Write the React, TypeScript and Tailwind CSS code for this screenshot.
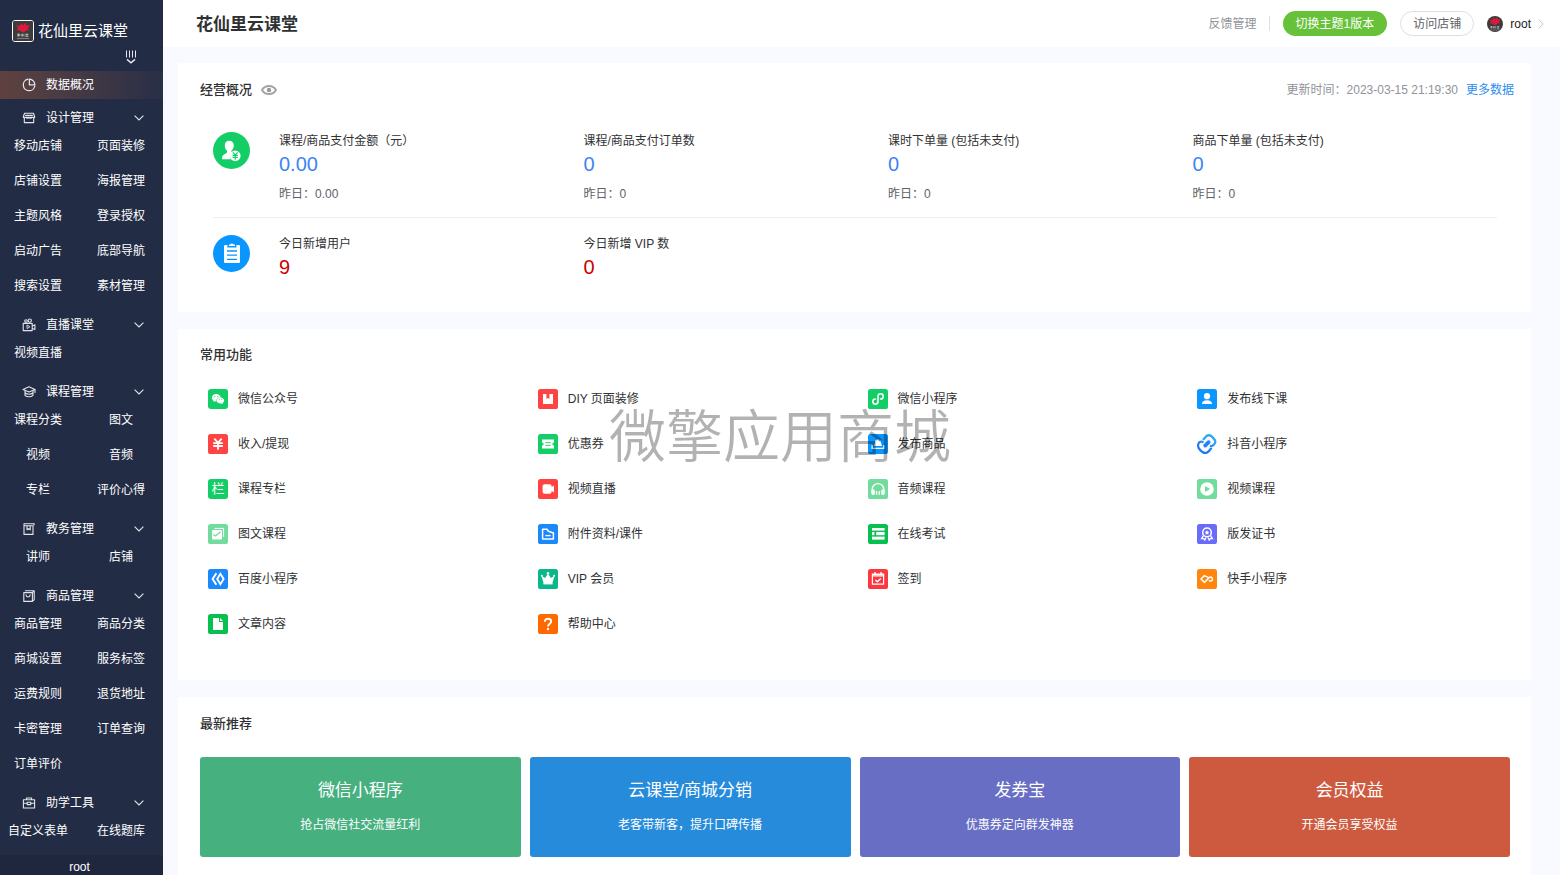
import type { ReactNode } from 'react';
import { AiFillWechat } from 'react-icons/ai';

/* ---------- sidebar icons ---------- */

function LineIcon({ children }: { children: ReactNode }) {
  return (
    <svg
      viewBox="0 0 14 14"
      className="h-[14px] w-[14px] shrink-0 text-[#e3e5ea]"
      fill="none"
      stroke="currentColor"
      strokeWidth="1.1"
      strokeLinecap="round"
      strokeLinejoin="round"
      aria-hidden="true"
    >
      {children}
    </svg>
  );
}

const pieIcon = (
  <LineIcon>
    <path d="M6 1.2A5.8 5.8 0 1 0 12.8 8" strokeWidth="1.3" />
    <path d="M7.4 1.2V6.8H12.8A5.6 5.6 0 0 0 7.4 1.2Z" strokeWidth="1.3" />
  </LineIcon>
);
const shopIcon = (
  <LineIcon>
    <path d="M2.6 2.2H11.4L12.6 5.2V6.4H1.4V5.2Z M2.3 6.8V11.6H11.7V6.8" />
    <path d="M3.6 4.4H10.4M4.2 6.2C4.4 7.6 6.6 7.6 7 6.4C7.4 7.6 9.6 7.6 9.8 6.2" />
  </LineIcon>
);
const liveIcon = (
  <LineIcon>
    <path d="M1.2 5.4H10.2V12.6H1.2Z M10.4 8L12.9 6.8V11.6L10.4 10.4" />
    <path d="M5 7.4V10.6L7.6 9Z" strokeWidth="0.9" />
    <circle cx="4" cy="3" r="1.3" />
    <circle cx="7.8" cy="2.6" r="1.6" />
  </LineIcon>
);
const capIcon = (
  <LineIcon>
    <path d="M7 1.8L13 4.4L7 7L1 4.4Z" />
    <path d="M3 5.8V10.4C4.8 12.2 9.2 12.2 11 10.4V5.8M3.2 8C5 9.6 9 9.6 10.8 8M13 4.6V7.6" />
  </LineIcon>
);
const bookIcon = (
  <LineIcon>
    <path d="M2 1.8H12M2 1.8V12.4H11V3.8H2.4" />
    <path d="M5 4V7.8L6.6 6.6L8.2 7.8V4M12 1.8V3" />
  </LineIcon>
);
const bagIcon = (
  <LineIcon>
    <path d="M1.8 3.6H10.4V12.4H1.8Z M3.4 1.8H12.2V10.8L10.6 12.2M12 2L10.4 3.6" />
    <path d="M4 5.8C4.4 8.8 7.8 8.8 8.2 5.8" />
  </LineIcon>
);
const toolIcon = (
  <LineIcon>
    <path d="M1.4 3.8H12.6V12H1.4Z M4.4 3.6V2H9.6V3.6" />
    <path d="M1.6 7.2H5.2M8.8 7.2H12.4M5.2 6.2H8.8V8.6H5.2Z" />
  </LineIcon>
);

function ChevronDown() {
  return (
    <svg viewBox="0 0 10 6" className="h-[6px] w-[10px]" fill="none" stroke="#e3e5ea" strokeWidth="1.1" aria-hidden="true">
      <path d="M0.6 0.7L5 5L9.4 0.7" />
    </svg>
  );
}

function Logo({ className }: { className: string }) {
  return (
    <svg viewBox="0 0 22 22" className={className} aria-hidden="true">
      <rect width="22" height="22" fill="#3d3c3d" />
      <path
        d="M3.4 4.6L7.4 5.6L9 2.2L11 4.6L14.4 1.8L14.6 5L18.6 4.6L16.2 8L18 9.4L14 10.8L11 13L8 10.8L4 9.8L5.8 7.6Z"
        fill="#e0183d"
      />
      <path d="M4.6 14.6H7.6M6 13.8V17M4.6 16.2H7.6M9 14.2V17M10.4 14V17M12 14.2V17M13.6 14.6H17M13.6 16.8H17M15.3 14V17" stroke="#d8d8d8" strokeWidth="0.8" />
      <path d="M4.4 19.2H17.6" stroke="#9a9a9a" strokeWidth="0.8" />
    </svg>
  );
}

/* ---------- sidebar ---------- */

type Group = { title: string; icon: ReactNode; items: string[] };

const groups: Group[] = [
  {
    title: '设计管理',
    icon: shopIcon,
    items: ['移动店铺', '页面装修', '店铺设置', '海报管理', '主题风格', '登录授权', '启动广告', '底部导航', '搜索设置', '素材管理'],
  },
  { title: '直播课堂', icon: liveIcon, items: ['视频直播'] },
  { title: '课程管理', icon: capIcon, items: ['课程分类', '图文', '视频', '音频', '专栏', '评价心得'] },
  { title: '教务管理', icon: bookIcon, items: ['讲师', '店铺'] },
  {
    title: '商品管理',
    icon: bagIcon,
    items: ['商品管理', '商品分类', '商城设置', '服务标签', '运费规则', '退货地址', '卡密管理', '订单查询', '订单评价'],
  },
  { title: '助学工具', icon: toolIcon, items: ['自定义表单', '在线题库'] },
];

function Sidebar() {
  return (
    <aside className="flex w-[163px] shrink-0 flex-col bg-[#222c45] text-xs text-white">
      <div className="flex items-center gap-1 pt-5 pl-3">
        <Logo className="h-[22px] w-[22px] rounded-[3px] border border-white" />
        <span className="text-[15px] leading-[22px]">花仙里云课堂</span>
      </div>
      <button type="button" aria-label="收起菜单" className="mt-2 mr-[27px] self-end">
        <svg viewBox="0 0 10 15" className="h-[15px] w-[10px]" fill="none" stroke="#e6e8ee" strokeWidth="1" aria-hidden="true">
          <path d="M0.5 0.5V7.5M3.5 0.5V7.5M6.5 0.5V7.5M9.5 0.5V7.5" />
          <path d="M1 9.4L5 12.8L9 9.4" strokeWidth="1.4" />
        </svg>
      </button>
      <nav className="mt-[6px]">
        <a
          href="#overview"
          className="flex h-7 items-center gap-[10px] bg-linear-to-r from-[#5f413f] to-[#282f47] pl-[22px]"
        >
          {pieIcon}
          数据概况
        </a>
        <div className="mt-[5px] flex flex-col gap-[11px]">
          {groups.map((group) => (
            <section key={group.title}>
              <button type="button" className="flex h-7 w-full items-center gap-[10px] pr-[19px] pl-[22px]">
                {group.icon}
                <span className="flex-1 text-left">{group.title}</span>
                <ChevronDown />
              </button>
              <ul className="grid grid-cols-2 gap-x-[7px] gap-y-[7px] pr-1">
                {group.items.map((item) => (
                  <li key={item} className="flex h-7 items-center justify-center whitespace-nowrap">
                    <a href={'#' + item}>{item}</a>
                  </li>
                ))}
              </ul>
            </section>
          ))}
        </div>
      </nav>
      <div className="mt-auto bg-[#1f273f] pt-1 pr-1 text-center leading-4">root</div>
    </aside>
  );
}

/* ---------- header ---------- */

function Header() {
  return (
    <header className="flex h-[47px] items-center justify-between bg-white pr-4 pl-[33px]">
      <h1 className="pt-0.5 text-[17px] font-bold text-[#303133]">花仙里云课堂</h1>
      <div className="flex items-center text-xs">
        <a href="#feedback" className="text-[#909399]">反馈管理</a>
        <span className="mr-[13px] ml-3 h-[15px] w-px bg-[#dcdfe6]" />
        <button type="button" className="h-[25px] rounded-full bg-[#67c23a] px-[13px] text-white">
          切换主题1版本
        </button>
        <button type="button" className="ml-[13px] h-[25px] rounded-full border border-[#dcdfe6] px-3 text-[#606266]">
          访问店铺
        </button>
        <button type="button" className="ml-[13px] flex items-center text-[#222]">
          <Logo className="h-4 w-4 rounded-full" />
          <span className="mr-[7px] ml-[7px]">root</span>
          <svg viewBox="0 0 6 10" className="h-[10px] w-[6px]" fill="none" stroke="#c0c4cc" strokeWidth="1" aria-hidden="true">
            <path d="M0.7 0.6L5.2 5L0.7 9.4" />
          </svg>
        </button>
      </div>
    </header>
  );
}

/* ---------- overview ---------- */

type Stat = { label: string; value: string; yesterday?: string };

const salesStats: Stat[] = [
  { label: '课程/商品支付金额（元）', value: '0.00', yesterday: '0.00' },
  { label: '课程/商品支付订单数', value: '0', yesterday: '0' },
  { label: '课时下单量 (包括未支付)', value: '0', yesterday: '0' },
  { label: '商品下单量 (包括未支付)', value: '0', yesterday: '0' },
];
const userStats: Stat[] = [
  { label: '今日新增用户', value: '9' },
  { label: '今日新增 VIP 数', value: '0' },
];

function StatRow({ icon, stats, valueClass }: { icon: ReactNode; stats: Stat[]; valueClass: string }) {
  return (
    <div className="flex gap-[29px]">
      {icon}
      <dl className="grid flex-1 grid-cols-4">
        {stats.map((s) => (
          <div key={s.label}>
            <dt className="text-xs leading-[18px] text-[#303133]">{s.label}</dt>
            <dd className={valueClass}>{s.value}</dd>
            {s.yesterday && <dd className="mt-[9px] text-xs leading-[18px] text-[#606266]">昨日：{s.yesterday}</dd>}
          </div>
        ))}
      </dl>
    </div>
  );
}

const memberIcon = (
  <svg viewBox="0 0 37 37" className="h-[37px] w-[37px] shrink-0" aria-hidden="true">
    <circle cx="18.5" cy="18.5" r="18.5" fill="#13ce66" />
    <path d="M16.2 8.8C19 8.8 20.8 10.8 20.8 13.6C20.8 15.8 19.8 17.6 18.4 18.8V20L20 21C18 22.4 17 24.6 17.6 27.2H9.2C8.8 24.6 9.4 23.4 11.4 22.2C12.8 21.4 14 21 14 20V18.8C12.6 17.6 11.8 15.8 11.8 13.6C11.8 10.8 13.4 8.8 16.2 8.8Z" fill="#fff" />
    <circle cx="22.2" cy="23.8" r="5.4" fill="#fff" />
    <path d="M19.8 20.4L22.2 23.2L24.6 20.4M19.6 23.4H24.8M19.6 25.4H24.8M22.2 23V27.8" stroke="#13ce66" strokeWidth="1.1" fill="none" />
  </svg>
);
const clipboardIcon = (
  <svg viewBox="0 0 37 37" className="h-[37px] w-[37px] shrink-0" aria-hidden="true">
    <circle cx="18.5" cy="18.5" r="18.5" fill="#0a96ff" />
    <path d="M12 10H14.4V12.4H23.4V10H26A1 1 0 0 1 27 11V27A1 1 0 0 1 26 28H12A1 1 0 0 1 11 27V11A1 1 0 0 1 12 10Z" fill="#fff" />
    <path d="M16 11V9.6H17.4A1.6 1.6 0 0 1 20.4 9.6H22V11Z" fill="#fff" />
    <path d="M14 16H24M14 20.2H24M14 24.4H24" stroke="#0a96ff" strokeWidth="1.3" />
  </svg>
);

function Overview() {
  return (
    <section className="bg-white pt-[17px] pr-[17px] pb-[33px] pl-[22px]">
      <div className="flex items-center justify-between text-xs leading-5">
        <div className="flex items-center gap-[9px]">
          <h2 className="text-[13px] font-medium text-[#303133]">经营概况</h2>
          <button type="button" aria-label="隐藏数据">
            <svg viewBox="0 0 16 10" className="h-[10px] w-4" aria-hidden="true">
              <path d="M1 5C4 -0.4 12 -0.4 15 5C12 10.4 4 10.4 1 5Z" fill="none" stroke="#a3a3a3" strokeWidth="1.9" />
              <circle cx="8" cy="5" r="2.2" fill="#999" />
            </svg>
          </button>
        </div>
        <p className="text-[#909399]">
          更新时间：2023-03-15 21:19:30
          <a href="#more" className="ml-2 text-[#2d8cf0]">更多数据</a>
        </p>
      </div>
      <div className="mt-8 mr-[17px] ml-[13px]">
        <StatRow icon={memberIcon} stats={salesStats} valueClass="mt-0.5 text-xl leading-6 text-[#3d85f0]" />
        <hr className="mt-[14px] mb-[17px] border-[#ebeef5]" />
        <StatRow icon={clipboardIcon} stats={userStats} valueClass="mt-0.5 text-xl leading-6 text-[#cc0000]" />
      </div>
    </section>
  );
}

/* ---------- common functions ---------- */

function Tile({ fill, children }: { fill: string; children: ReactNode }) {
  return (
    <svg viewBox="0 0 20 20" className="h-5 w-5 shrink-0" fill="none" aria-hidden="true">
      <rect width="20" height="20" rx="2.6" fill={fill} />
      {children}
    </svg>
  );
}

const functions: { name: string; icon: ReactNode }[] = [
  {
    name: '微信公众号',
    icon: (
      <span className="flex h-5 w-5 shrink-0 items-center justify-center rounded-[3px] bg-[#13ce66] text-white">
        <AiFillWechat className="h-[14px] w-[14px]" />
      </span>
    ),
  },
  {
    name: 'DIY 页面装修',
    icon: (
      <Tile fill="#ff4343">
        <path d="M5 5H8.4V10L9.9 9L11.4 10V5H15V15H5Z" fill="#fff" />
      </Tile>
    ),
  },
  {
    name: '微信小程序',
    icon: (
      <Tile fill="#13ce66">
        <path d="M7.4 10A2.6 2.6 0 1 0 10 12.6V7.4A2.6 2.6 0 1 1 12.6 10" stroke="#fff" strokeWidth="1.6" strokeLinecap="round" />
      </Tile>
    ),
  },
  {
    name: '发布线下课',
    icon: (
      <Tile fill="#0a96ff">
        <circle cx="10" cy="7.2" r="3.1" fill="#fff" />
        <path d="M5 15C5 12.4 6.8 11.2 10 11.2C13.2 11.2 15 12.4 15 15Z" fill="#fff" />
      </Tile>
    ),
  },
  {
    name: '收入/提现',
    icon: (
      <Tile fill="#ff4343">
        <path d="M6.4 4.6L10 8.8L13.6 4.6M5.2 9.2H14.8M5.2 12H14.8M10 8.8V15.8" stroke="#fff" strokeWidth="1.8" />
      </Tile>
    ),
  },
  {
    name: '优惠券',
    icon: (
      <Tile fill="#13ce66">
        <path d="M4 5.6H16V8.4A1.6 1.6 0 0 0 16 11.6V14.4H4V11.6A1.6 1.6 0 0 0 4 8.4Z" fill="#fff" />
        <path d="M7.4 8.6H12.6M7.4 11.4H12.6" stroke="#13ce66" strokeWidth="0.9" />
      </Tile>
    ),
  },
  {
    name: '发布商品',
    icon: (
      <Tile fill="#0a96ff">
        <path d="M7 6.4H8.6L10 4.8L11.4 6.4H13V9L14 12H6L7 9Z" fill="#fff" />
        <path d="M4.2 11.2V14.4H15.8V11.2" stroke="#fff" strokeWidth="1.4" />
      </Tile>
    ),
  },
  {
    name: '抖音小程序',
    icon: (
      <svg viewBox="0 0 20 20" className="h-5 w-5 shrink-0" fill="none" strokeWidth="2.3" strokeLinecap="round" aria-hidden="true">
        <path d="M6.6 5.2L8.4 3.2C9.8 1.4 12.2 0.8 14.2 2L16.8 4.6C19 7 18.8 9.2 16.4 11" stroke="#2ea7f5" />
        <path d="M2.2 8.4C0.6 10.4 0.8 13.6 3 15.8L5 17.6C7.4 19.6 10 19 11.6 17.4L14 14.6" stroke="#2478f2" />
        <path d="M2.6 8.2C4.2 7.2 5.6 8 5.6 8M15.6 11.6C15 12 14.4 12.2 13.8 12" stroke="#2a90f4" />
        <path d="M8.2 11.6L11.6 8.2" stroke="#2585f2" strokeWidth="3.8" />
      </svg>
    ),
  },
  {
    name: '课程专栏',
    icon: (
      <span aria-hidden="true" className="flex h-5 w-5 shrink-0 items-center justify-center rounded-[3px] bg-[#13ce66] text-[13px] leading-5 text-white">
        栏
      </span>
    ),
  },
  {
    name: '视频直播',
    icon: (
      <Tile fill="#ff4343">
        <rect x="4.6" y="5.2" width="9" height="9.6" rx="2" fill="#fff" />
        <path d="M13 8.6L16 6.6V13.4L13 11.4Z" fill="#fff" />
      </Tile>
    ),
  },
  {
    name: '音频课程',
    icon: (
      <Tile fill="#71dc9d">
        <path d="M4.2 14V10.4A5.8 5.8 0 0 1 15.8 10.4V14" stroke="#fff" strokeWidth="1.4" />
        <rect x="3.4" y="10.6" width="3.4" height="5.4" rx="1.4" fill="#fff" />
        <rect x="8" y="12" width="1.3" height="3.8" rx="0.6" fill="#fff" />
        <rect x="10.7" y="12" width="1.3" height="3.8" rx="0.6" fill="#fff" />
        <rect x="13.2" y="10.6" width="3.4" height="5.4" rx="1.4" fill="#fff" />
      </Tile>
    ),
  },
  {
    name: '视频课程',
    icon: (
      <Tile fill="#71dc9d">
        <circle cx="10" cy="10" r="6.8" fill="#fff" />
        <path d="M8 6.9L13.2 10L8 13.1Z" fill="#71dc9d" />
      </Tile>
    ),
  },
  {
    name: '图文课程',
    icon: (
      <Tile fill="#71dc9d">
        <path d="M6.4 4.4H15.6V12.8" stroke="#fff" strokeWidth="1" />
        <rect x="4" y="6" width="10" height="9.4" rx="0.8" fill="#fff" />
        <path d="M5.4 10.4L7.6 12L12.6 7.8" stroke="#71dc9d" strokeWidth="1.2" />
      </Tile>
    ),
  },
  {
    name: '附件资料/课件',
    icon: (
      <Tile fill="#1b88fb">
        <path d="M4.6 5.2H9L10.4 7.2L15.4 9V15H4.6Z" stroke="#fff" strokeWidth="1.5" strokeLinejoin="round" />
        <path d="M7.4 11.6H12.6" stroke="#fff" strokeWidth="1.4" />
      </Tile>
    ),
  },
  {
    name: '在线考试',
    icon: (
      <Tile fill="#07c050">
        <rect x="4" y="4" width="12.6" height="2.6" fill="#fff" />
        <rect x="4" y="8" width="12.6" height="3.2" fill="#fff" />
        <rect x="4" y="12.6" width="12.6" height="3" fill="#fff" />
        <path d="M6.4 8V12.8L7.3 12L8.2 12.8V8Z" fill="#07c050" />
      </Tile>
    ),
  },
  {
    name: '版发证书',
    icon: (
      <Tile fill="#6b6bfa">
        <circle cx="10" cy="8.4" r="4.3" stroke="#fff" strokeWidth="1.5" />
        <path d="M10 6.2L10.8 7.6L12.3 7.9L11.2 9L11.4 10.6L10 9.9L8.6 10.6L8.8 9L7.7 7.9L9.2 7.6Z" fill="#fff" />
        <path d="M6.4 11.6L4.6 14.6H6.6L7.8 16L9 13.4M13.6 11.6L15.4 14.6H13.4L12.2 16L11 13.4" stroke="#fff" strokeWidth="1.3" />
      </Tile>
    ),
  },
  {
    name: '百度小程序',
    icon: (
      <Tile fill="#1b88fb">
        <path d="M8.4 4.2L4.6 10L8.4 15.8" stroke="#fff" strokeWidth="2" />
        <path d="M12.4 4.8L9.2 10L12.4 15.2L15.6 10Z" stroke="#fff" strokeWidth="1.9" />
      </Tile>
    ),
  },
  {
    name: 'VIP 会员',
    icon: (
      <Tile fill="#08b88a">
        <path d="M3.6 7L7.2 9L10 4.6L12.8 9L16.4 7L14.8 13H5.2Z" fill="#fff" />
        <rect x="5.4" y="13" width="9.2" height="2.4" fill="#fff" />
        <circle cx="10" cy="4.2" r="1.2" fill="#fff" />
        <circle cx="3.8" cy="6.8" r="1" fill="#fff" />
        <circle cx="16.2" cy="6.8" r="1" fill="#fff" />
      </Tile>
    ),
  },
  {
    name: '签到',
    icon: (
      <Tile fill="#fb3740">
        <path d="M4.4 5H15.6V15.2H4.4Z M4.4 7H15.6" stroke="#fff" strokeWidth="1.2" />
        <path d="M4.4 5.8H15.6M7 3V6M13 3V6" stroke="#fff" strokeWidth="1.5" />
        <path d="M7.4 11L9.4 12.8L12.8 9.6" stroke="#fff" strokeWidth="1.4" />
      </Tile>
    ),
  },
  {
    name: '快手小程序',
    icon: (
      <Tile fill="#ff850f">
        <path d="M10.6 8.2L7.4 6.6L4 10L7.4 13.4L11.6 9.2A2 2 0 1 1 12.4 11.8" stroke="#fff" strokeWidth="1.5" strokeLinejoin="round" strokeLinecap="round" />
      </Tile>
    ),
  },
  {
    name: '文章内容',
    icon: (
      <Tile fill="#07c050">
        <path d="M5 4H11V8H15V16H5Z" fill="#fff" />
        <path d="M12 4L15 7H12Z" fill="#fff" />
      </Tile>
    ),
  },
  {
    name: '帮助中心',
    icon: (
      <Tile fill="#ff6a00">
        <path d="M6.8 7.8C6.8 5.8 8.2 4.8 10 4.8C11.8 4.8 13.2 5.8 13.2 7.5C13.2 9.6 10 9.8 10 12.4" stroke="#fff" strokeWidth="1.9" />
        <circle cx="10" cy="15" r="1.2" fill="#fff" />
      </Tile>
    ),
  },
];

function CommonFunctions() {
  return (
    <section className="bg-white pt-4 pr-3 pb-[46px] pl-[22px]">
      <h2 className="text-[13px] leading-5 font-medium text-[#303133]">常用功能</h2>
      <ul className="mt-6 grid grid-cols-4 gap-y-[25px]">
        {functions.map((fn) => (
          <li key={fn.name} className="pl-2">
            <a href={'#' + fn.name} className="flex h-5 items-center gap-[10px] text-xs leading-5 text-[#303133]">
              {fn.icon}
              {fn.name}
            </a>
          </li>
        ))}
      </ul>
    </section>
  );
}

/* ---------- recommendations ---------- */

const promos = [
  { title: '微信小程序', text: '抢占微信社交流量红利', color: 'bg-[#46b07f]' },
  { title: '云课堂/商城分销', text: '老客带新客，提升口碑传播', color: 'bg-[#278bdb]' },
  { title: '发券宝', text: '优惠券定向群发神器', color: 'bg-[#676ec4]' },
  { title: '会员权益', text: '开通会员享受权益', color: 'bg-[#cd5a3e]' },
];

function Recommendations() {
  return (
    <section className="flex-1 bg-white pt-[17px] pr-3 pb-[18px] pl-[22px]">
      <h2 className="text-[13px] leading-5 font-medium text-[#303133]">最新推荐</h2>
      <div className="mt-[23px] grid grid-cols-4">
        {promos.map((p) => (
          <a
            key={p.title}
            href={'#' + p.title}
            className={'mr-[9px] flex h-[100px] flex-col items-center justify-center gap-3 rounded-[3px] text-white ' + p.color}
          >
            <span className="text-[17px] leading-6">{p.title}</span>
            <span className="text-xs leading-5">{p.text}</span>
          </a>
        ))}
      </div>
    </section>
  );
}

export default function App() {
  return (
    <div className="flex min-h-screen bg-[#f9faff] font-['Liberation_Sans','Noto_Sans_CJK_SC',sans-serif]">
      <Sidebar />
      <div className="flex min-w-0 flex-1 flex-col">
        <Header />
        <main className="flex flex-1 flex-col gap-[17px] pt-4 pr-[29px] pl-[15px]">
          <Overview />
          <CommonFunctions />
          <Recommendations />
        </main>
      </div>
      <div className="pointer-events-none fixed inset-0 flex items-center justify-center pb-[10px]">
        <span className="font-['Noto_Sans_CJK_SC',sans-serif] text-[57px] leading-none font-[350] text-black/30">微擎应用商城</span>
      </div>
    </div>
  );
}
